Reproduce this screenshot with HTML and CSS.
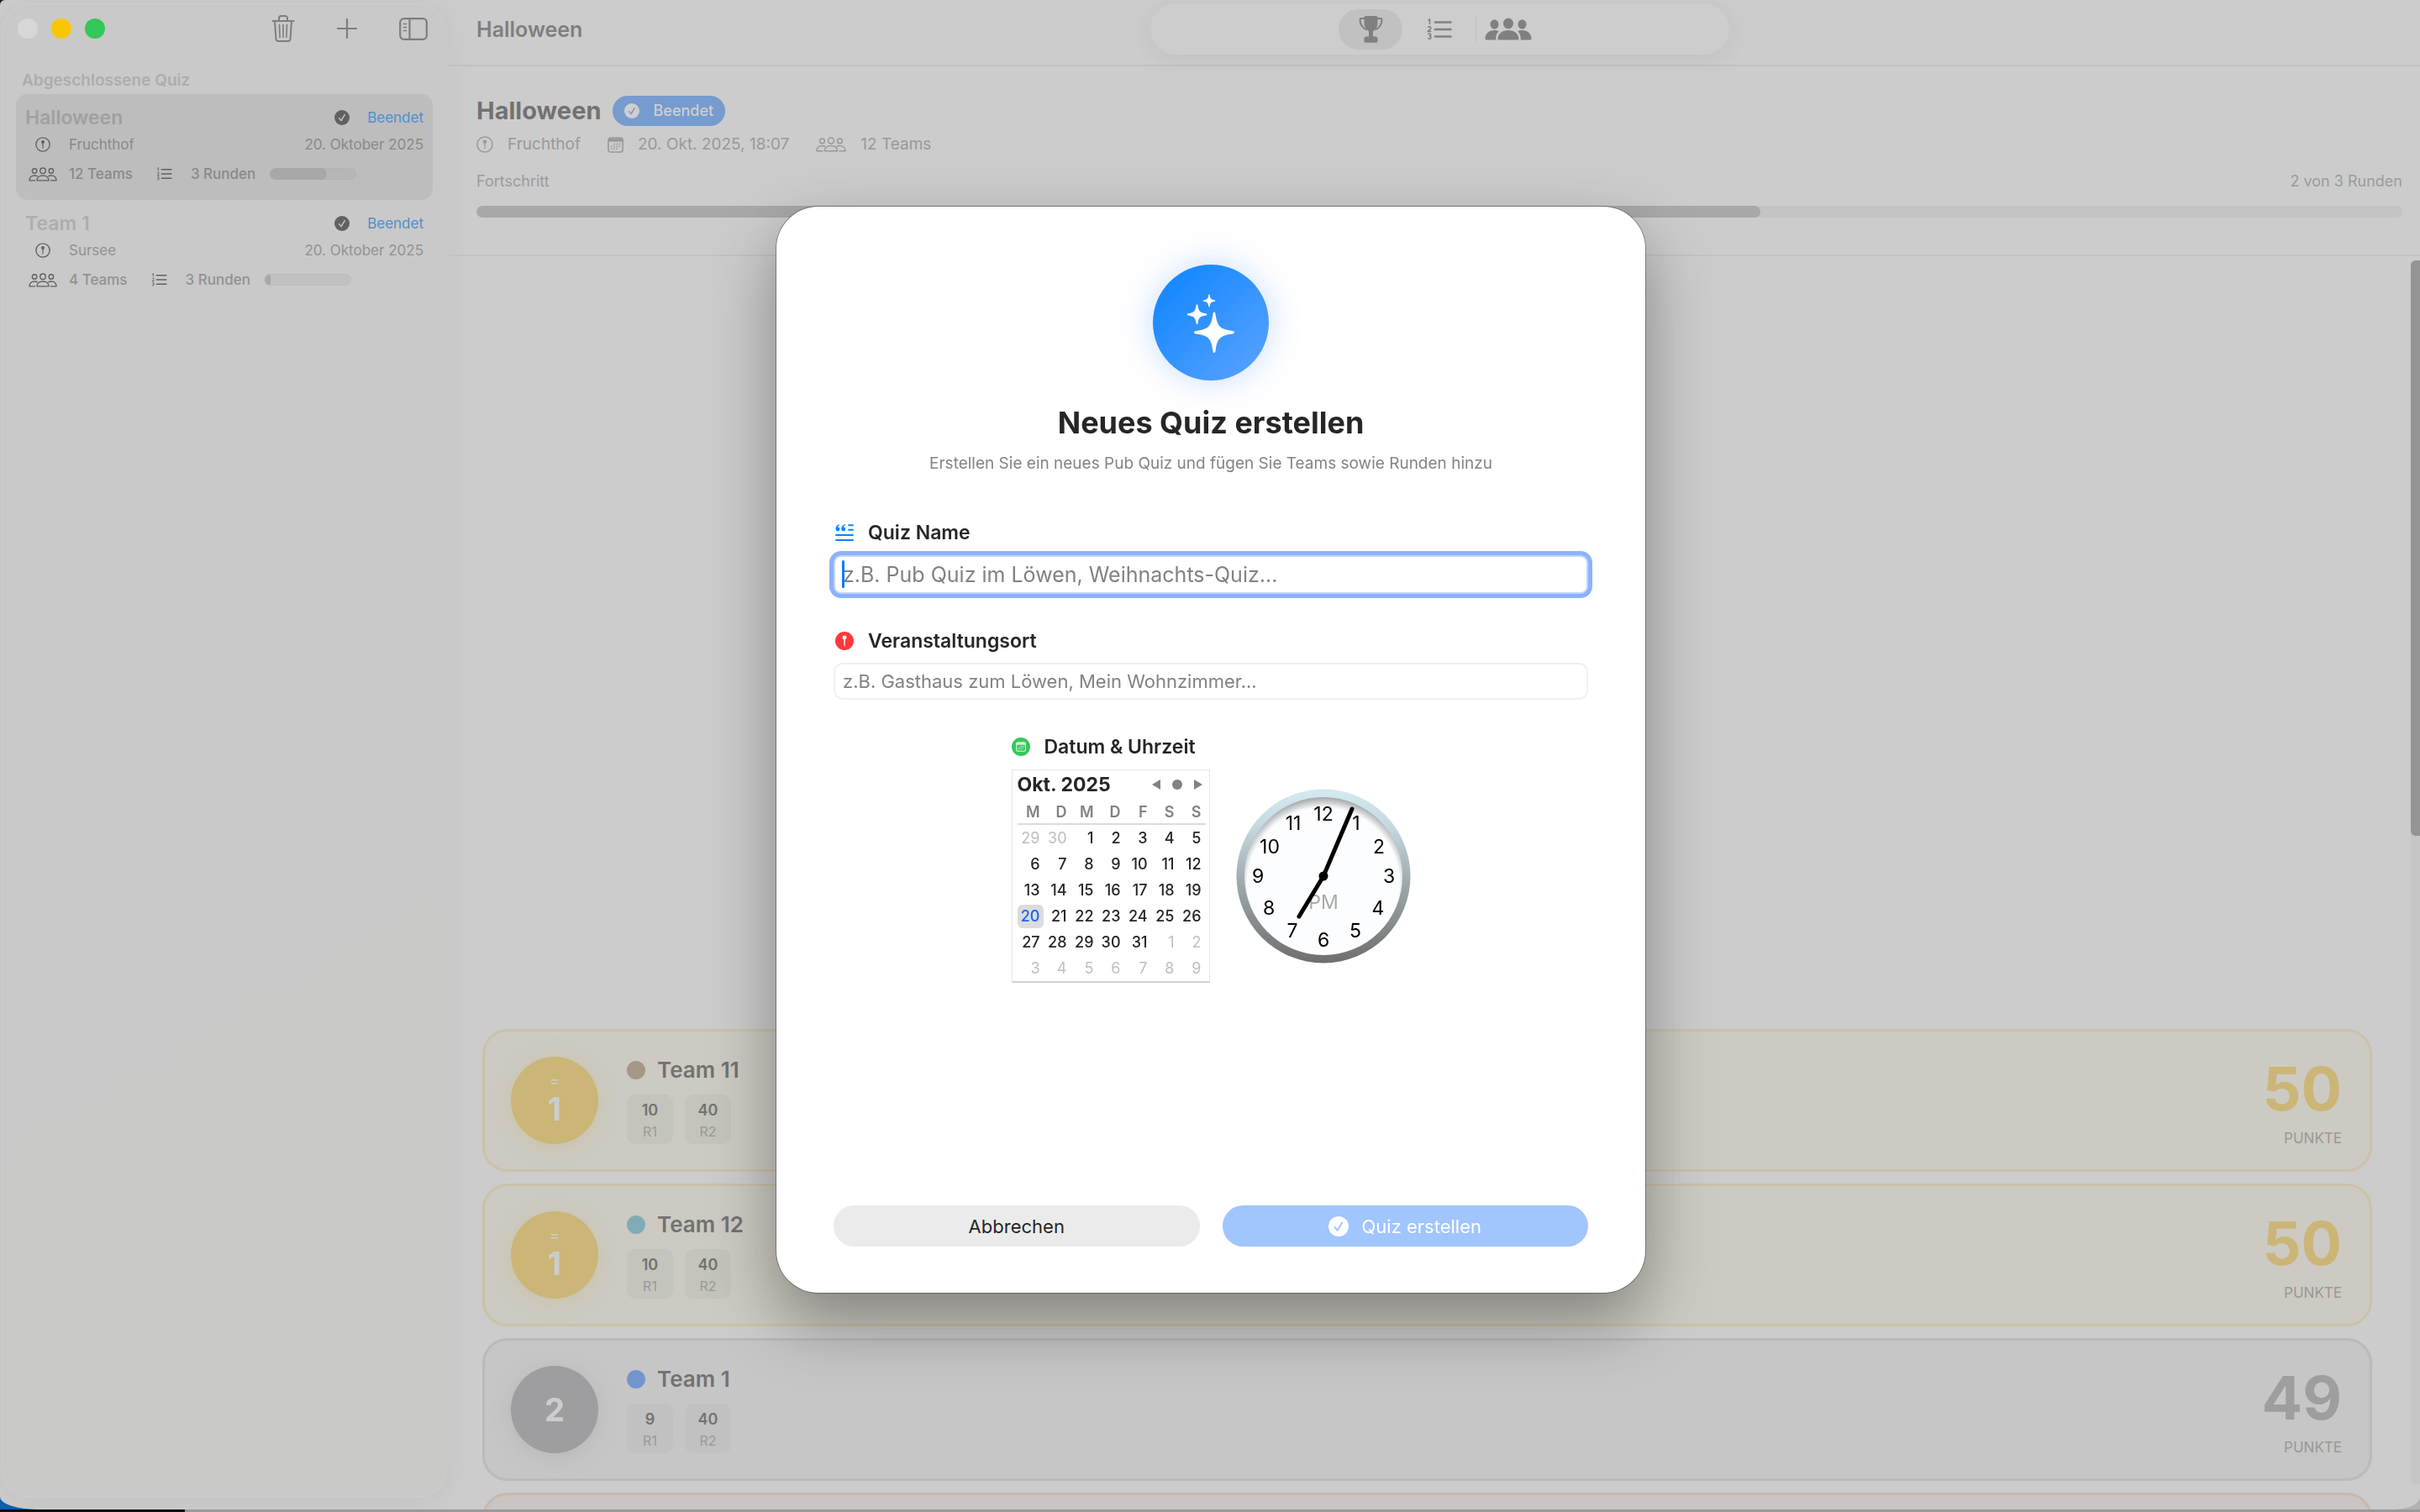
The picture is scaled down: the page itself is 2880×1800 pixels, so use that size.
FILE: index.html
```html
<!DOCTYPE html>
<html lang="de">
<head>
<meta charset="utf-8">
<title>Pub Quiz</title>
<link rel="stylesheet" href="styles.css">
</head>
<body>
<svg class="sprite" aria-hidden="true">
  <symbol id="i-check" viewBox="0 0 24 24"><circle class="disc" cx="12" cy="12" r="12"/><path class="mark" d="M7.500 12.800l3.200 4 5.600-9.200"/></symbol>
  <symbol id="i-pin" viewBox="0 0 24 24"><circle cx="12" cy="12" r="10.900" fill="none" stroke="currentColor" stroke-width="1.800"/><circle cx="12" cy="8" r="2.700" fill="currentColor"/><path d="M11 10h2l-.4 8-.6 1-.6-1z" fill="currentColor"/></symbol>
  <symbol id="i-people" viewBox="0 0 36 18"><g fill="none" stroke="currentColor" stroke-width="1.500"><circle cx="18" cy="4.500" r="3.500"/><circle cx="7.500" cy="4.800" r="2.900"/><circle cx="28.500" cy="4.800" r="2.900"/><path d="M10.500 16.800c0-3.900 3.200-6.300 7.500-6.300s7.500 2.400 7.500 6.300zM8.500 16.800H1c0-4 2.800-6.300 6.500-6.300 1.500 0 2.700.4 3.700 1M27.500 16.800H35c0-4-2.800-6.300-6.500-6.300-1.500 0-2.700.4-3.700 1" stroke-linejoin="round"/></g></symbol>
  <symbol id="i-people-fill" viewBox="0 0 56 27"><g fill="currentColor"><ellipse cx="28" cy="7" rx="6" ry="6.500"/><ellipse cx="11.500" cy="8" rx="5" ry="5.700"/><ellipse cx="44.500" cy="8" rx="5" ry="5.700"/><path d="M15.500 25.500c0-6 5-10.500 12.500-10.500s12.500 4.500 12.500 10.500c0 .5-.5 1-1.200 1H16.700c-.7 0-1.200-.5-1.200-1zM13.500 26.500H2c-1 0-1.500-.4-1.500-1.200 0-5.500 4-10.300 11-10.300 2 0 3.800.5 5.200 1.300-2.500 2.500-4 6-3.200 10.200zM42.500 26.500H54c1 0 1.500-.4 1.500-1.200 0-5.500-4-10.300-11-10.300-2 0-3.800.5-5.200 1.300 2.500 2.500 4 6 3.200 10.200z"/></g></symbol>
  <symbol id="i-list" viewBox="0 0 30 26"><g fill="none" stroke="currentColor"><path d="M10 4.500h18.500M10 13h18.500M10 21.500h18.500" stroke-width="2.600" stroke-linecap="round"/><path d="M1.500 2.500L3.500 1v6M1.500 11c.2-1.600 3.600-1.600 3.400.4-.1 1.400-2.400 2.400-3.400 4h3.800M1.500 19.200c.5-1.500 3.400-1.300 3.300.4 0 1-.9 1.500-2 1.500 1.300 0 2.300.6 2.200 1.800-.2 1.800-3.300 1.900-3.700.2" stroke-width="1.500"/></g></symbol>
  <symbol id="i-cal" viewBox="0 0 20 20"><path d="M4 1h12a3 3 0 013 3v12a3 3 0 01-3 3H4a3 3 0 01-3-3V4a3 3 0 013-3z" fill="none" stroke="currentColor" stroke-width="1.700"/><path d="M1 2h18v4H1z" fill="currentColor"/><path d="M8 9h9M4 12h13M4 15h9" fill="none" stroke="currentColor" stroke-width="1.700" stroke-dasharray="1.700 1.600"/></symbol>
  <symbol id="i-trash" viewBox="0 0 28 32"><g fill="none" stroke="currentColor" stroke-width="2" stroke-linecap="round" stroke-linejoin="round"><path d="M1.500 7h25M4 7l1.500 21.500a2.500 2.500 0 002.500 2.500h12a2.500 2.500 0 002.500-2.500L24 7M9 6.500V3.500A2.500 2.500 0 0111.500 1h5A2.500 2.500 0 0119 3.500v3"/><path d="M9.500 11.500l.6 15M14 11.500v15M18.500 11.500l-.6 15" stroke-width="1.600"/></g></symbol>
  <symbol id="i-plus" viewBox="0 0 24 24"><path d="M12 1v22M1 12h22" fill="none" stroke="currentColor" stroke-width="2.200" stroke-linecap="round"/></symbol>
  <symbol id="i-side" viewBox="0 0 34 27"><g fill="none" stroke="currentColor" stroke-width="2.200" stroke-linecap="round"><rect x="1.200" y="1.200" width="31.600" height="24.600" rx="4.500"/><path d="M12.500 1.500v24"/><path d="M5.500 7.500h3M5.500 11.500h3M5.500 15.500h3" stroke-width="1.600"/></g></symbol>
  <symbol id="i-trophy" viewBox="0 0 28 32"><path d="M6 1.800C6 .8 6.700 0 7.800 0h12.400C21.300 0 22 .8 22 1.800V9c0 4-2 6.500-5.500 9.500v6h3c1.500 0 2.500 1 2.500 2.500V30c0 1-.6 1.700-1.600 1.700H7.600C6.600 31.700 6 31 6 30v-3c0-1.500 1-2.500 2.500-2.500h3v-6C8 15.500 6 13 6 9z" fill="currentColor"/><path d="M7 3H2.500C1.500 3 1 3.500 1 4.500 1 10 3.500 14 9 16.500M21 3h4.500c1 0 1.500.5 1.500 1.500 0 5.500-2.500 9.500-8 12" fill="none" stroke="currentColor" stroke-width="2"/></symbol>
  <symbol id="i-quote" viewBox="0 0 22 20"><path d="M16 1.200h5M16 6.800h5M1 13h20M1 19h20" fill="none" stroke="currentColor" stroke-width="1.900" stroke-linecap="round"/><g fill="currentColor"><circle cx="3" cy="6" r="2.400"/><circle cx="9.800" cy="6" r="2.400"/><path d="M.5 6C.4 3 2 .8 4.900.3l.3 1C3.500 2 2.700 3 2.700 5zM7.300 6C7.200 3 8.800.8 11.700.3l.3 1C10.300 2 9.500 3 9.500 5z"/></g></symbol>
</svg>

<div class="window">
  <aside class="sidebar">
    <div class="sidebar-bar">
      <div class="lights"><span class="light"></span><span class="light light-min"></span><span class="light light-max"></span></div>
      <div class="tools">
        <button class="tool" aria-label="Löschen"><svg width="28" height="32"><use href="#i-trash"/></svg></button>
        <button class="tool" aria-label="Hinzufügen"><svg width="24" height="24"><use href="#i-plus"/></svg></button>
        <button class="tool" aria-label="Seitenleiste"><svg width="34" height="27"><use href="#i-side"/></svg></button>
      </div>
    </div>
    <h2 class="section">Abgeschlossene Quiz</h2>
    <ul class="quizzes">
      <li class="quiz quiz-selected">
        <div class="quiz-head"><strong class="quiz-name">Halloween</strong><span class="cell"><svg class="dark-check" width="18" height="18"><use href="#i-check"/></svg></span><span class="state">Beendet</span></div>
        <div class="quiz-line"><span class="cell"><svg width="18" height="18"><use href="#i-pin"/></svg></span><span>Fruchthof</span><span class="date">20. Oktober 2025</span></div>
        <div class="quiz-line quiz-stats"><span class="cell"><svg width="34" height="17"><use href="#i-people"/></svg></span><span class="strong">12 Teams</span><span class="cell cell-next"><svg width="19" height="16"><use href="#i-list"/></svg></span><span class="strong">3 Runden</span><span class="bar"><span class="bar-fill" style="width:66%"></span></span></div>
      </li>
      <li class="quiz">
        <div class="quiz-head"><strong class="quiz-name">Team 1</strong><span class="cell"><svg class="dark-check" width="18" height="18"><use href="#i-check"/></svg></span><span class="state">Beendet</span></div>
        <div class="quiz-line"><span class="cell"><svg width="18" height="18"><use href="#i-pin"/></svg></span><span>Sursee</span><span class="date">20. Oktober 2025</span></div>
        <div class="quiz-line quiz-stats"><span class="cell"><svg width="34" height="17"><use href="#i-people"/></svg></span><span class="strong">4 Teams</span><span class="cell cell-next"><svg width="19" height="16"><use href="#i-list"/></svg></span><span class="strong">3 Runden</span><span class="bar"><span class="bar-fill" style="width:7%"></span></span></div>
      </li>
    </ul>
  </aside>

  <main class="main">
    <div class="toolbar">
      <span class="toolbar-title">Halloween</span>
      <nav class="tabs">
        <button class="tab tab-active" aria-label="Rangliste"><svg width="29" height="32"><use href="#i-trophy"/></svg></button>
        <button class="tab" aria-label="Runden"><svg width="30" height="26"><use href="#i-list"/></svg></button>
        <span class="tab-rule"></span>
        <button class="tab" aria-label="Teams"><svg width="56" height="27"><use href="#i-people-fill"/></svg></button>
      </nav>
    </div>
    <header class="header">
      <div class="header-title"><h1>Halloween</h1><span class="badge"><svg width="18" height="18"><use href="#i-check"/></svg>Beendet</span></div>
      <div class="meta">
        <span class="meta-item"><svg width="20" height="20"><use href="#i-pin"/></svg>Fruchthof</span>
        <span class="meta-item"><svg width="19" height="19"><use href="#i-cal"/></svg>20. Okt. 2025, 18:07</span>
        <span class="meta-item"><svg width="36" height="18"><use href="#i-people"/></svg>12 Teams</span>
      </div>
      <div class="progress-label"><span>Fortschritt</span><span>2 von 3 Runden</span></div>
      <div class="progress"><div class="progress-fill" style="width:66.67%"></div></div>
    </header>
    <section class="board">
      <ol class="cards">
        <li class="card gold">
          <div class="rank"><small>=</small><b>1</b></div>
          <div class="team"><div class="team-name"><i class="dot brown"></i>Team 11</div><div class="chips"><span class="chip"><b>10</b><small>R1</small></span><span class="chip"><b>40</b><small>R2</small></span></div></div>
          <div class="points"><b>50</b><small>PUNKTE</small></div>
        </li>
        <li class="card gold">
          <div class="rank"><small>=</small><b>1</b></div>
          <div class="team"><div class="team-name"><i class="dot teal"></i>Team 12</div><div class="chips"><span class="chip"><b>10</b><small>R1</small></span><span class="chip"><b>40</b><small>R2</small></span></div></div>
          <div class="points"><b>50</b><small>PUNKTE</small></div>
        </li>
        <li class="card silver">
          <div class="rank"><b>2</b></div>
          <div class="team"><div class="team-name"><i class="dot blue"></i>Team 1</div><div class="chips"><span class="chip"><b>9</b><small>R1</small></span><span class="chip"><b>40</b><small>R2</small></span></div></div>
          <div class="points"><b>49</b><small>PUNKTE</small></div>
        </li>
        <li class="card bronze"></li>
      </ol>
      <div class="scroller"><div class="thumb"></div></div>
    </section>
  </main>
</div>

<div class="overlay">
  <form class="modal" role="dialog" aria-labelledby="modal-title">
    <div class="hero"><svg width="64" height="64" viewBox="-32 -32 64 64"><g fill="#fff"><path d="M4-12.500c1 0 1.300.8 1.600 2.500C7.500 4.500 11 8 25.500 10c1.700.3 2.500.7 2.500 1.700s-.8 1.400-2.500 1.700C11 15.400 7.500 19 5.600 33.400c-.3 1.700-.6 2.500-1.600 2.500s-1.300-.8-1.600-2.500C.5 19-3 15.400-17.500 13.400c-1.700-.3-2.500-.7-2.500-1.700s.8-1.400 2.500-1.700C-3 8 .5 4.500 2.400-10c.3-1.700.6-2.500 1.600-2.500z"/><path d="M-16.500-21.500c.7 0 .9.500 1 1.300.9 6.600 2.400 8.400 9.500 9.400.8.100 1.300.4 1.300 1.100s-.5 1-1.300 1.100c-7.100 1-8.600 2.800-9.500 9.400-.1.800-.3 1.300-1 1.300s-.9-.5-1-1.300c-.9-6.600-2.400-8.400-9.500-9.400-.8-.1-1.300-.4-1.300-1.100s.5-1 1.300-1.100c7.100-1 8.600-2.800 9.500-9.400.1-.8.300-1.300 1-1.300z"/><path d="M-2-33.500c.5 0 .6.300.7.800.6 4.300 1.600 5.300 5.800 6 .5.100.8.300.8.700s-.3.600-.8.700c-4.200.7-5.200 1.700-5.800 6-.1.500-.2.800-.7.800s-.6-.3-.7-.8c-.6-4.300-1.600-5.300-5.800-6-.5-.1-.8-.3-.8-.7s.3-.6.8-.7c4.200-.7 5.200-1.700 5.800-6 .1-.5.200-.8.700-.8z"/></g></svg></div>
    <h2 class="modal-title" id="modal-title">Neues Quiz erstellen</h2>
    <p class="modal-sub">Erstellen Sie ein neues Pub Quiz und fügen Sie Teams sowie Runden hinzu</p>

    <div class="fields">
      <div class="field">
        <label class="label" for="name"><svg class="c-blue" width="22" height="20"><use href="#i-quote"/></svg>Quiz Name</label>
        <div class="input-wrap"><input class="input input-focus" id="name" type="text" placeholder="z.B. Pub Quiz im Löwen, Weihnachts-Quiz..."></div>
      </div>
      <div class="field">
        <label class="label" for="place"><svg width="22" height="22" viewBox="0 0 24 24"><circle cx="12" cy="12" r="12" fill="#ff383c"/><circle cx="12" cy="7.500" r="2.700" fill="#fff"/><path d="M11 9h2l-.4 9-.6 1.500-.6-1.500z" fill="#fff"/></svg>Veranstaltungsort</label>
        <input class="input" id="place" type="text" placeholder="z.B. Gasthaus zum Löwen, Mein Wohnzimmer...">
      </div>
      <div class="when">
        <div class="label when-label"><svg width="22" height="22" viewBox="0 0 24 24"><circle cx="12" cy="12" r="12" fill="#34c759"/><g color="#e4f8e9"><use href="#i-cal" x="5.500" y="5.500" width="13" height="13"/></g></svg>Datum &amp; Uhrzeit</div>
        <div class="pickers">
          <div class="calendar">
            <div class="cal-head"><span>Okt. 2025</span>
              <div class="cal-nav">
                <button type="button" aria-label="Vorheriger Monat"><svg width="10" height="12"><path d="M10 0v12L0 6z"/></svg></button>
                <button type="button" aria-label="Heute"><svg width="12" height="12"><circle cx="6" cy="6" r="6"/></svg></button>
                <button type="button" aria-label="Nächster Monat"><svg width="10" height="12"><path d="M0 0v12l10-6z"/></svg></button>
              </div>
            </div>
            <table>
              <thead><tr><th>M</th><th>D</th><th>M</th><th>D</th><th>F</th><th>S</th><th>S</th></tr></thead>
              <tbody>
                <tr><td class="out">29</td><td class="out">30</td><td>1</td><td>2</td><td>3</td><td>4</td><td>5</td></tr>
                <tr><td>6</td><td>7</td><td>8</td><td>9</td><td>10</td><td>11</td><td>12</td></tr>
                <tr><td>13</td><td>14</td><td>15</td><td>16</td><td>17</td><td>18</td><td>19</td></tr>
                <tr><td class="today"><span>20</span></td><td>21</td><td>22</td><td>23</td><td>24</td><td>25</td><td>26</td></tr>
                <tr><td>27</td><td>28</td><td>29</td><td>30</td><td>31</td><td class="out">1</td><td class="out">2</td></tr>
                <tr><td class="out">3</td><td class="out">4</td><td class="out">5</td><td class="out">6</td><td class="out">7</td><td class="out">8</td><td class="out">9</td></tr>
              </tbody>
            </table>
          </div>
          <svg class="clock" width="208" height="208" viewBox="-104 -104 208 208" role="img" aria-label="19:05">
            <defs>
              <linearGradient id="ring" x1="0" y1="0" x2="0" y2="1"><stop offset="0" stop-color="#d5e9f0"/><stop offset=".2" stop-color="#c6dae1"/><stop offset=".6" stop-color="#98a1a4"/><stop offset="1" stop-color="#6e6e6e"/></linearGradient>
              <radialGradient id="face" cx="0" cy="9" r="104" gradientUnits="userSpaceOnUse"><stop offset="0" stop-color="#fcfdfe"/><stop offset=".87" stop-color="#fcfdfe"/><stop offset="1" stop-color="#9a9fa1"/></radialGradient>
            </defs>
            <circle r="103.500" fill="url(#ring)"/>
            <circle r="94" fill="url(#face)"/>
            <g class="numerals">
              <text x="0" y="-66">12</text><text x="39" y="-55">1</text><text x="66" y="-27">2</text><text x="78" y="8">3</text><text x="65" y="46">4</text><text x="38" y="73">5</text><text x="0" y="84">6</text><text x="-37" y="73">7</text><text x="-65" y="46">8</text><text x="-78" y="8">9</text><text x="-64" y="-27">10</text><text x="-36" y="-55">11</text>
              <text class="pm" x="0" y="39">PM</text>
            </g>
            <path d="M0 0L34-80M0 0L-29 48" stroke="#000" stroke-width="5" stroke-linecap="round"/><circle r="5.500"/>
          </svg>
        </div>
      </div>
    </div>

    <div class="actions">
      <button class="btn" type="button">Abbrechen</button>
      <button class="btn btn-primary" type="submit" disabled><svg width="24" height="24"><use href="#i-check"/></svg>Quiz erstellen</button>
    </div>
  </form>
</div>
</body>
</html>
```
FILE: styles.css
```css
* { box-sizing: border-box; }
html, body { height: 100%; }
body {
  margin: 0;
  overflow: hidden;
  font-family: Inter, "Liberation Sans", sans-serif;
  font-size: 18px;
  line-height: 24px;
  color: #727272;
  background:
    linear-gradient(to right, #0b1014 220px, #9a9a9a 220px) bottom / 100% 3px no-repeat,
    linear-gradient(#1c1c1c, #1c1c1c) top left / 10px 10px no-repeat,
    linear-gradient(to right, #0a60b0 50%, #b2b2b2 50%);
}
h1, h2, p, ul, ol { margin: 0; padding: 0; list-style: none; }
button, input { font: inherit; color: inherit; }
button { border: 0; background: none; padding: 0; }
svg { display: block; flex: none; }
small { font-size: inherit; }
.sprite { position: absolute; width: 0; height: 0; }
.disc { fill: currentColor; }
.mark { fill: none; stroke: var(--mark, #fff); stroke-width: 2; stroke-linecap: round; stroke-linejoin: round; }

.window {
  display: flex;
  height: calc(100vh - 3px);
  overflow: hidden;
  background: #ccc;
  border-radius: 6px 0 30px 44px / 6px 0 15px 15px;
}

/* Sidebar */
.sidebar {
  flex: none;
  width: 530px;
  margin: 4px 2px 14px;
  border-radius: 36px;
  background: linear-gradient(150deg, #c9c9c9 60%, #c9c9c5 90%);
  box-shadow: inset 0 0 0 1px #cecece, 0 4px 30px rgba(0, 0, 0, .05);
}
.sidebar-bar { display: flex; justify-content: space-between; align-items: center; height: 60px; padding: 0 23px 0 19px; }
.lights { display: flex; gap: 16px; }
.light { width: 24px; height: 24px; border-radius: 50%; background: #d7d7d7; }
.light-min { background: #f9c606; }
.light-max { background: #34c759; }
.tools { display: flex; align-items: center; gap: 50px; color: #7e7e7e; }
.section { padding: 20px 24px 4px; font-size: 19px; font-weight: 600; color: #adadad; }
.quizzes { padding: 0 17px; }
.quiz { padding: 14px 11px 19px; border-radius: 14px; color: #555; font-size: 17px; }
.quiz-selected { background: #bdbdbd; }
.quiz-head, .quiz-line { display: flex; align-items: center; }
.quiz-name { flex: 1; font-size: 23px; line-height: 28px; font-weight: 600; color: #adadad; }
.quiz-selected .quiz-name { color: #a0a0a0; }
.state { color: #4e90cb; margin-left: 9px; }
.quiz-line { margin-top: 6px; color: #929292; }
.quiz-selected .quiz-line { color: #898989; }
.quiz-stats { margin-top: 11px; }
.cell { display: flex; justify-content: center; width: 42px; color: #616161; }
.quiz-line .cell { margin-right: 10px; }
.quiz-line .cell-next { margin-left: 17px; }
.strong { font-weight: 500; }
.dark-check { --mark: #c4c4c4; }
.date { margin-left: auto; }
.bar { width: 103px; height: 14px; margin-left: 17px; border-radius: 7px; background: rgba(0, 0, 0, .035); box-shadow: inset 0 0 0 1px rgba(0, 0, 0, .02); overflow: hidden; }
.bar-fill { display: block; height: 100%; border-radius: 7px; background: #a8a8a8; }

/* Main column */
.main { flex: 1; min-width: 0; display: flex; flex-direction: column; }
.toolbar {
  display: grid;
  grid-template-columns: 1fr 689px 1fr;
  align-items: center;
  padding: 4px 21px 12px 33px;
  border-bottom: 2px solid #c1c1c1;
}
.toolbar-title { font-size: 25px; line-height: 32px; font-weight: 600; color: #7f7f7f; }
.tabs {
  display: flex;
  justify-content: center;
  align-items: center;
  height: 61px;
  border-radius: 31px;
  background: #cdcdcd;
  color: #808080;
  box-shadow: 0 4px 30px rgba(0, 0, 0, .06);
}
.tab { display: flex; align-items: center; justify-content: center; width: 76px; height: 48px; border-radius: 24px; }
.tab-active { background: #c1c1c1; margin-right: 6px; }
.tab-rule { width: 1px; height: 34px; margin-left: 5px; background: #c4c4c4; }

.header { padding: 35px 21px 44px 33px; border-bottom: 2px solid #c3c3c3; }
.header-title { display: flex; align-items: center; gap: 14px; }
h1 { font-size: 29px; line-height: 36px; font-weight: 700; color: #727272; }
.badge {
  --mark: #769bcf;
  display: flex; align-items: center; gap: 16px;
  height: 36px; padding: 0 14px; border-radius: 18px;
  background: #769bcf; color: #cfcfcf; font-weight: 500;
}
.meta { display: flex; gap: 32px; margin-top: 8px; font-size: 19px; line-height: 28px; color: #999; }
.meta-item { display: flex; align-items: center; gap: 17px; }
.progress-label { display: flex; justify-content: space-between; margin-top: 18px; color: #9b9b9b; }
.progress { height: 14px; margin-top: 17px; border-radius: 7px; background: #c4c4c4; overflow: hidden; }
.progress-fill { height: 100%; border-radius: 7px; background: #a8a8a8; }

.board { flex: 1; min-height: 0; display: flex; align-items: flex-start; overflow: hidden; }
.cards { flex: 1; display: grid; gap: 14px; padding: 920px 46px 0 40px; }
.card {
  display: flex; align-items: center; gap: 34px;
  min-height: 170px;
  padding: 0 33px 0 31px;
  border: 3px solid var(--line);
  border-radius: 30px;
  background: var(--fill);
}
.gold { --line: #cbc3a8; --fill: #cccac2; --ink: #cbb677; --chip: #c4c4bc; }
.silver { --line: #bababa; --fill: #c6c6c6; --ink: #9e9ea0; --chip: #c1c1c1; }
.bronze { --line: #c7b9ad; --fill: #cac5c2; }
.rank {
  display: flex; flex-direction: column; align-items: center; justify-content: center;
  width: 104px; height: 104px; border-radius: 50%;
  background: var(--ink); color: #ccc;
  box-shadow: 0 4px 24px color-mix(in srgb, var(--ink) 35%, transparent);
}
.rank small { font-size: 19px; line-height: 20px; }
.rank b { font-size: 38px; line-height: 46px; font-weight: 700; }
.team { flex: 1; }
.team-name { display: flex; align-items: center; gap: 14px; font-size: 26px; line-height: 32px; font-weight: 600; }
.dot { width: 22px; height: 22px; border-radius: 50%; }
.brown { background: #a59885; }
.teal { background: #80abb6; }
.blue { background: #7295cf; }
.chips { display: flex; gap: 14px; margin-top: 13px; }
.chip { display: grid; gap: 4px; width: 55px; padding: 8px 0 5px; border-radius: 10px; background: var(--chip); text-align: center; }
.chip b { font-size: 18px; line-height: 22px; font-weight: 600; }
.chip small { font-size: 16px; line-height: 20px; color: #999; }
.points { text-align: right; display: grid; gap: 6px; }
.points b { font-size: 72px; line-height: 84px; font-weight: 700; color: var(--ink); }
.points small { font-size: 17px; line-height: 22px; color: #999995; }
.scroller { width: 11px; height: calc(100% - 35px); margin-top: 5px; border-radius: 6px 0 0 6px; background: #c6c6c6; }
.thumb { height: 47%; border-radius: 6px 0 0 6px; background: #949494; }

/* Dialog */
.overlay { position: fixed; inset: 0; display: flex; align-items: center; justify-content: center; padding: 0 0 15px 2px; }
.modal {
  display: flex; flex-direction: column; align-items: center;
  width: 1034px; min-height: 1293px;
  padding: 69px 68px 55px;
  border-radius: 50px;
  background: #fff; color: #262626;
  box-shadow: 0 0 0 1px rgba(0, 0, 0, .3), 0 34px 80px rgba(0, 0, 0, .36);
}
.hero {
  display: flex; align-items: center; justify-content: center;
  width: 138px; height: 138px; border-radius: 50%;
  background: linear-gradient(135deg, #0a84ff, #5ca3ff);
  box-shadow: 0 0 40px rgba(40, 120, 255, .25);
}
.hero svg { overflow: visible; }
.modal-title { margin-top: 27px; font-size: 36px; line-height: 46px; font-weight: 700; }
.modal-sub { margin-top: 14px; font-size: 19px; color: #848484; }
.fields { display: grid; gap: 42px; width: 100%; margin-top: 56px; }
.field { display: grid; gap: 12px; }
.label { display: flex; align-items: center; gap: 17px; padding-left: 2px; font-size: 23px; line-height: 28px; font-weight: 600; }
.c-blue { color: #0a84ff; }
.input-wrap { position: relative; padding-top: 1px; }
.input-wrap::after { content: ""; position: absolute; left: 10px; top: 7px; width: 3px; height: 33px; border-radius: 2px; background: #0a7aff; }
.input { display: block; width: 100%; height: 44px; padding: 0 9px; border: 2px solid #f0f0f0; border-radius: 11px; background: #fff; font-size: 22px; outline: 0; }
.input::placeholder { color: #828282; opacity: 1; }
.input-focus { height: 46px; border-color: #c3d7fc; border-radius: 9px; box-shadow: 0 0 0 5px #8cb2fb; font-size: 25px; }
.when { justify-self: center; }
.when-label { padding-left: 0; }
.pickers { display: flex; align-items: center; gap: 31px; margin-top: 13px; }
.calendar { width: 236px; padding: 3px 4px 0 6px; border: 1px solid #e6e6e6; border-bottom: 2px solid #d2d2d2; }
.cal-head { display: flex; justify-content: space-between; align-items: center; font-size: 23px; line-height: 28px; font-weight: 700; }
.cal-nav { display: flex; gap: 8px; padding-right: 1px; }
.cal-nav svg { fill: #828282; }
.cal-nav button { padding: 0 3px; }
table { width: 100%; margin-top: 6px; border-spacing: 0; table-layout: fixed; font-size: 18px; }
th, td { padding: 0 5px 0 0; text-align: right; }
th { height: 28px; border-bottom: 2px solid #dcdcdc; color: #828282; font-weight: 600; }
td { height: 31px; font-weight: 500; }
.out { color: #bfbfbf; font-weight: 400; }
.today { padding: 0 1px 0 0; color: #1668f0; }
.today span { display: block; height: 28px; padding-right: 4px; line-height: 28px; border-radius: 6px; background: #dcdcdc; }
.numerals { font-size: 23px; text-anchor: middle; fill: #000; }
.pm { fill: #aaa; }
.actions { display: grid; grid-template-columns: 1fr 1fr; gap: 27px; width: 100%; margin-top: auto; }
.btn { display: flex; align-items: center; justify-content: center; gap: 15px; height: 49px; border-radius: 25px; background: #ebebeb; color: #262626; font-size: 22px; line-height: 28px; }
.btn-primary { --mark: #a0c5ff; background: #a0c5ff; color: #fff; }
```
